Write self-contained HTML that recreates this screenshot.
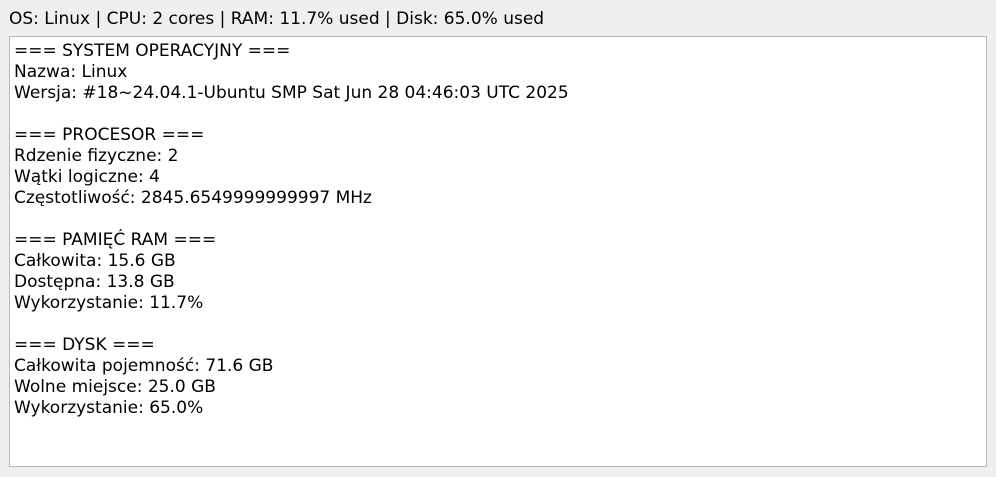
<!DOCTYPE html>
<html><head><meta charset="utf-8"><style>
html,body{margin:0;padding:0;}
body{width:996px;height:477px;background:#efefef;font-family:"DejaVu Sans",sans-serif;font-size:17px;color:#000;position:relative;overflow:hidden;}
#top{position:absolute;left:9px;top:9px;line-height:21px;white-space:pre;}
#box{position:absolute;left:9px;top:36px;width:976px;height:429px;background:#fff;border:1px solid #b8b8b8;}
#txt{position:absolute;left:4px;top:4px;margin:0;font-family:inherit;font-size:17px;line-height:21px;white-space:pre;}
</style></head><body>
<div id="top">OS: Linux | CPU: 2 cores | RAM: 11.7% used | Disk: 65.0% used</div>
<div id="box"><pre id="txt">=== SYSTEM OPERACYJNY ===
Nazwa: Linux
Wersja: #18~24.04.1-Ubuntu SMP Sat Jun 28 04:46:03 UTC 2025

=== PROCESOR ===
Rdzenie fizyczne: 2
Wątki logiczne: 4
Częstotliwość: 2845.6549999999997 MHz

=== PAMIĘĆ RAM ===
Całkowita: 15.6 GB
Dostępna: 13.8 GB
Wykorzystanie: 11.7%

=== DYSK ===
Całkowita pojemność: 71.6 GB
Wolne miejsce: 25.0 GB
Wykorzystanie: 65.0%</pre></div>
</body></html>
